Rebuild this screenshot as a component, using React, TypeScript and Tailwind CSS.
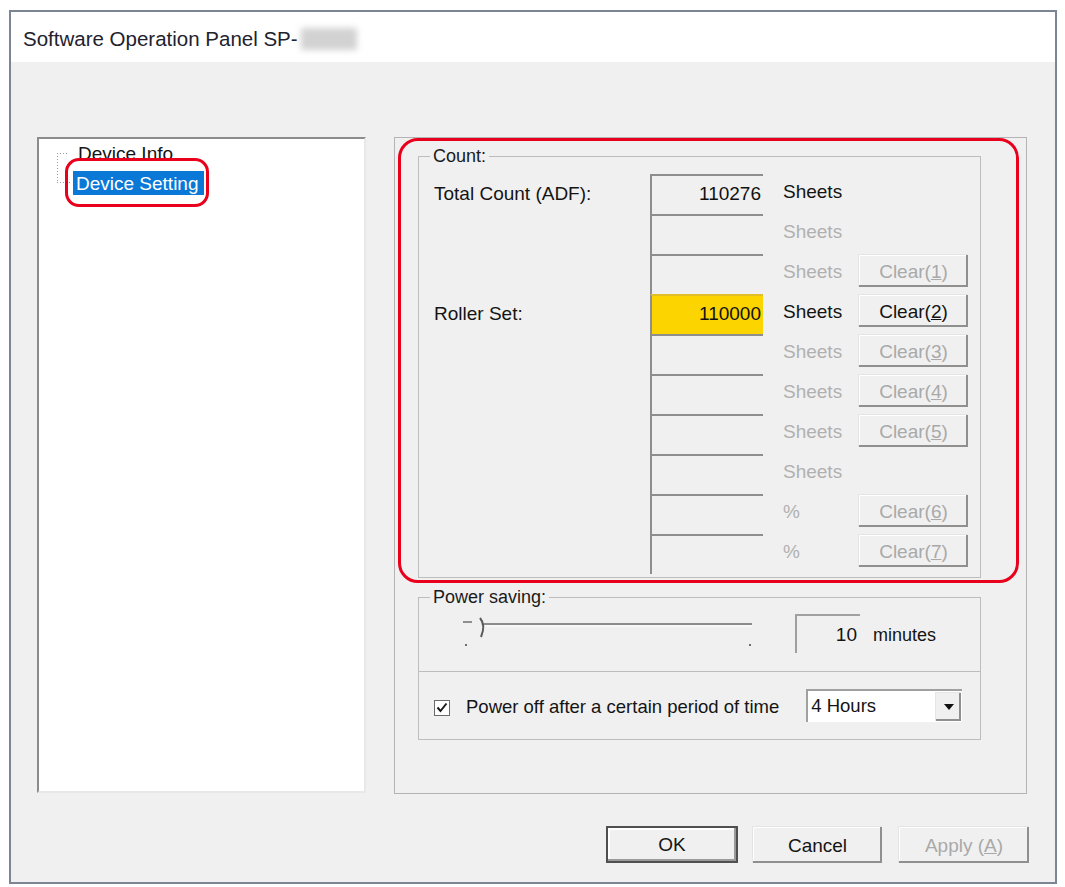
import clsx from 'clsx';
import type { ReactNode } from 'react';

type CountRow = {
  label?: string;
  value?: string;
  unit: string;
  unitOn?: boolean;
  clear?: string;
  clearOn?: boolean;
  highlight?: boolean;
};

const rows: CountRow[] = [
  { label: 'Total Count (ADF):', value: '110276', unit: 'Sheets', unitOn: true },
  { unit: 'Sheets' },
  { unit: 'Sheets', clear: '1' },
  { label: 'Roller Set:', value: '110000', unit: 'Sheets', unitOn: true, clear: '2', clearOn: true, highlight: true },
  { unit: 'Sheets', clear: '3' },
  { unit: 'Sheets', clear: '4' },
  { unit: 'Sheets', clear: '5' },
  { unit: 'Sheets' },
  { unit: '%', clear: '6' },
  { unit: '%', clear: '7' },
];

function WinButton({
  children,
  disabled,
  isDefault,
  className,
}: {
  children: ReactNode;
  disabled?: boolean;
  isDefault?: boolean;
  className?: string;
}) {
  return (
    <div
      className={clsx(
        'flex items-center justify-center bg-[#f0f0f0] text-[19px] leading-none',
        disabled ? 'text-[#a9a9a9]' : 'text-[#141414]',
        isDefault
          ? 'border-2 border-[#505050] shadow-[inset_-2px_-2px_0_#9a9a9a,inset_2px_2px_0_#ffffff]'
          : 'border-t border-l border-[#e4e4e4] shadow-[inset_-2px_-2px_0_#8f8f8f,inset_1px_1px_0_#ffffff]',
        className,
      )}
    >
      {children}
    </div>
  );
}

function Legend({ children, className }: { children: ReactNode; className?: string }) {
  return (
    <legend className={clsx('px-[3px] text-[18px] leading-[18px] text-[#1a1a1a]', className)}>{children}</legend>
  );
}

function Slider() {
  return (
    <svg width="310" height="50" viewBox="0 0 310 50" className="mt-[4px]">
      {/* track */}
      <line x1="28" y1="14" x2="297" y2="14" stroke="#8c8c8c" strokeWidth="2" />
      <line x1="28" y1="16" x2="297" y2="16" stroke="#ffffff" strokeWidth="1" />
      {/* left marker */}
      <line x1="8" y1="12" x2="17" y2="12" stroke="#6f6f6f" strokeWidth="1.5" />
      {/* thumb */}
      <path d="M25 8 Q31 15 26 27" fill="none" stroke="#5a5a5a" strokeWidth="2" />
      {/* ticks */}
      <rect x="10" y="34" width="2" height="2" fill="#6f6f6f" />
      <rect x="294" y="34" width="2" height="2" fill="#6f6f6f" />
    </svg>
  );
}

export default function App() {
  return (
    <div className="w-[1065px] h-[887px] bg-white pt-[10px] pl-[9px] font-['Liberation_Sans',Arial,sans-serif]">
      <div className="w-[1048px] h-[874px] border-2 border-[#7b8594] flex flex-col">
        {/* title */}
        <div className="h-[50px] bg-white flex items-center pl-[12px] pt-[4px]">
          <span className="text-[20.5px] text-[#22222e]">Software Operation Panel SP-</span>
          <span className="ml-[3px] w-[56px] h-[22px] bg-[#d2d2d2] blur-[3px]" />
        </div>

        <div className="flex-1 bg-[#f0f0f0] flex flex-col pt-[75px]">
          <div className="flex pl-[26px]">
            {/* tree */}
            <div className="w-[329px] h-[656px] bg-white border-t-2 border-l-2 border-[#8c8c8c] border-r-2 border-b-2 border-r-[#e8e8e8] border-b-[#e8e8e8]">
              <div className="flex pl-[18px] pt-[2px]">
                <svg width="18" height="50" viewBox="0 0 18 50" className="mt-[12px]">
                  <line x1="0.5" y1="0" x2="0.5" y2="30" stroke="#9a9a9a" strokeDasharray="1 2" />
                  <line x1="0" y1="0.5" x2="12" y2="0.5" stroke="#9a9a9a" strokeDasharray="1 2" />
                  <line x1="0" y1="29.5" x2="15" y2="29.5" stroke="#9a9a9a" strokeDasharray="1 2" />
                </svg>
                <div className="flex flex-col text-[19px] leading-none">
                  <div className="h-[24px] flex items-center pl-[3px] text-[#141414]">Device Info</div>
                  <div className="relative mt-[6px] ml-[-2px]">
                    <div className="h-[24px] w-[131px] flex items-center pl-[3px] bg-[#0a78d7] text-white">Device Setting</div>
                    <div className="absolute left-[-8px] top-[-13px] w-[144px] h-[49px] rounded-[14px] border-[3px] border-[#e8001c]" />
                  </div>
                </div>
              </div>
            </div>

            {/* property page */}
            <div className="relative ml-[28px] w-[633px] h-[657px] border border-[#b4b4b4] px-[23px]">
              <fieldset className="mt-[9px] w-[563px] border border-[#bdbdbd] pl-[15px] pt-[9px] pb-[3px]">
                <Legend className="ml-[-4px]">Count:</Legend>
                {rows.map((r, i) => (
                  <div key={i} className="flex h-[40px] text-[19px] leading-none">
                    <div className="w-[216px] pt-[10px] text-[#141414]">{r.label}</div>
                    <div
                      className={clsx(
                        'w-[113px] border-t-2 border-l-2 border-[#8e8e8e] flex justify-end pr-[2px] pt-[8px] text-[#111]',
                        r.highlight ? 'bg-[#fcd400] border-t-[#e0bf2a]' : 'bg-[#f0f0f0]',
                      )}
                    >
                      {r.value}
                    </div>
                    <div className={clsx('w-[95px] pl-[20px] pt-[8px]', r.unitOn ? 'text-[#141414]' : 'text-[#b0b0b0]')}>
                      {r.unit}
                    </div>
                    {r.clear && (
                      <WinButton disabled={!r.clearOn} className="w-[110px] h-[33px]">
                        Clear(<span className="underline">{r.clear}</span>)
                      </WinButton>
                    )}
                  </div>
                ))}
              </fieldset>

              <fieldset className="mt-[10px] w-[563px] border border-[#bdbdbd]">
                <Legend className="ml-[11px]">Power saving:</Legend>
                <div className="h-[66px] flex items-start border-b border-[#bdbdbd]">
                  <div className="ml-[36px]">
                    <Slider />
                  </div>
                  <div className="ml-[30px] mt-[8px] w-[65px] h-[39px] border-t-2 border-l-2 border-[#a0a0a0] flex justify-end items-center pr-[3px] text-[19px] leading-none text-[#141414]">
                    10
                  </div>
                  <div className="ml-[13px] mt-[20px] text-[18px] leading-none text-[#141414]">minutes</div>
                </div>
                <div className="h-[67px] flex items-center pl-[15px] text-[18.5px] leading-none text-[#141414]">
                  <svg width="16" height="16" viewBox="0 0 16 16" className="mt-[4px]">
                    <rect x="0.5" y="0.5" width="15" height="15" fill="#ffffff" stroke="#6a6a6a" />
                    <path d="M3.5 7.5 L6.5 11 L12.5 3.5" fill="none" stroke="#1a1a1a" strokeWidth="2" />
                  </svg>
                  <span className="ml-[16px] mt-[4px]">Power off after a certain period of time</span>
                  <div className="ml-[27px] w-[156px] h-[33px] bg-white border-t-2 border-l-2 border-[#a0a0a0] flex items-center">
                    <span className="flex-1 pl-[3px] text-[18.5px]">4 Hours</span>
                    <div className="w-[26px] h-[29px] mr-[1px] bg-[#f0f0f0] border-t border-l border-[#e6e6e6] shadow-[inset_-2px_-2px_0_#8f8f8f] flex items-center justify-center">
                      <svg width="10" height="6" viewBox="0 0 10 6">
                        <path d="M0 0 H10 L5 6 Z" fill="#111" />
                      </svg>
                    </div>
                  </div>
                </div>
              </fieldset>

              <div className="absolute left-[3px] top-[0px] w-[621px] h-[445px] rounded-[20px] border-[3px] border-[#e8001c]" />
            </div>
          </div>

          <div className="flex justify-end gap-[14px] pr-[26px] mt-[32px]">
            <WinButton isDefault className="w-[132px] h-[37px]">OK</WinButton>
            <WinButton className="w-[130px] h-[37px]">Cancel</WinButton>
            <WinButton disabled className="w-[131px] h-[37px] ml-[2px]">
              Apply (<span className="underline">A</span>)
            </WinButton>
          </div>
        </div>
      </div>
    </div>
  );
}
